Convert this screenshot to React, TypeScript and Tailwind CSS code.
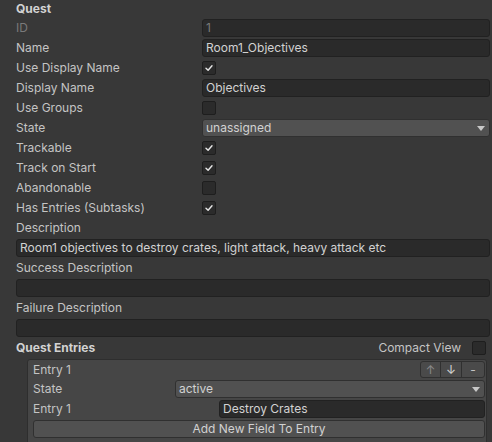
import React from 'react'

const font = { fontFamily: 'Inter, "Noto Sans", sans-serif' }

function Check({ on }: { on: boolean }) {
  return (
    <div className="w-[14px] h-[14px] rounded-[2px] bg-[#2b2b2b] border border-[#1e1e1e] flex items-center justify-center">
      {on && (
        <svg width="10" height="10" viewBox="0 0 10 10">
          <path d="M2 5.2 L4.1 7.2 L8 2.8" fill="none" stroke="#e6e6e6" strokeWidth="1.4" strokeLinecap="round" strokeLinejoin="round" />
        </svg>
      )}
    </div>
  )
}

function Arrow() {
  return (
    <svg width="8" height="5" viewBox="0 0 8 5" className="shrink-0">
      <path d="M0 0 H8 L4 5 Z" fill="#c8c8c8" />
    </svg>
  )
}

function TextField({ value, dim }: { value?: string; dim?: boolean }) {
  return (
    <div
      className={`flex-1 h-[18px] rounded-[3px] bg-[#2a2a2a] border border-[#212121] flex items-center px-[3px] ${
        dim ? 'text-[#7a7a7a]' : 'text-[#d2d2d2]'
      }`}
    >
      {value}
    </div>
  )
}

function Dropdown({ value }: { value: string }) {
  return (
    <div className="flex-1 h-[18px] rounded-[3px] bg-[#515151] border border-[#303030] flex items-center justify-between pl-[3px] pr-[4px] text-[#d2d2d2]">
      <span>{value}</span>
      <Arrow />
    </div>
  )
}

function Row({ label, children, dim }: { label: string; children?: React.ReactNode; dim?: boolean }) {
  return (
    <div className="flex items-center h-[20px] pl-[16px] pr-[2px]">
      <div className={`w-[186px] shrink-0 ${dim ? 'text-[#7a7a7a]' : ''}`}>{label}</div>
      <div className="flex-1 flex items-center">{children}</div>
    </div>
  )
}

export default function App() {
  return (
    <div className="w-[492px] h-[442px] overflow-hidden bg-[#383838] text-[#c4c4c4] text-[12px] leading-none" style={font}>
      <div className="flex items-center h-[18px] pl-[16px] font-bold text-[#d2d2d2]">Quest</div>
      <Row label="ID" dim>
        <TextField value="1" dim />
      </Row>
      <Row label="Name">
        <TextField value="Room1_Objectives" />
      </Row>
      <Row label="Use Display Name">
        <Check on />
      </Row>
      <Row label="Display Name">
        <TextField value="Objectives" />
      </Row>
      <Row label="Use Groups">
        <Check on={false} />
      </Row>
      <Row label="State">
        <Dropdown value="unassigned" />
      </Row>
      <Row label="Trackable">
        <Check on />
      </Row>
      <Row label="Track on Start">
        <Check on />
      </Row>
      <Row label="Abandonable">
        <Check on={false} />
      </Row>
      <Row label="Has Entries (Subtasks)">
        <Check on />
      </Row>

      {['Description', 'Success Description', 'Failure Description'].map((l, i) => (
        <div key={l}>
          <div className="flex items-center h-[20px] pl-[16px]">{l}</div>
          <div className="flex items-center h-[20px] pl-[16px] pr-[2px]">
            <TextField value={i === 0 ? 'Room1 objectives to destroy crates, light attack, heavy attack etc' : ''} />
          </div>
        </div>
      ))}

      <div className="flex items-center justify-between h-[20px] pl-[16px] pr-[6px]">
        <span className="font-bold text-[#d2d2d2]">Quest Entries</span>
        <div className="flex items-center gap-[11px]">
          <span>Compact View</span>
          <Check on={false} />
        </div>
      </div>

      <div className="ml-[27px] mr-[5px] mt-[1px] h-[100px] bg-[#464646] border border-[#2e2e2e] rounded-[3px] pl-[5px] pr-[1px]">
        <div className="flex items-center justify-between h-[19px]">
          <span>Entry 1</span>
          <div className="flex h-[17px] border border-[#303030] rounded-[3px] bg-[#4a4a4a] overflow-hidden">
            <div className="w-[20px] flex items-center justify-center text-[#8a8a8a] border-r border-[#303030]">↑</div>
            <div className="w-[21px] flex items-center justify-center text-[#d6d6d6] border-r border-[#303030]">↓</div>
            <div className="w-[22px] flex items-center justify-center text-[#c4c4c4]">-</div>
          </div>
        </div>
        <div className="flex items-center h-[20px]">
          <div className="w-[142px] shrink-0">State</div>
          <Dropdown value="active" />
        </div>
        <div className="flex items-center h-[20px]">
          <div className="w-[186px] shrink-0">Entry 1</div>
          <TextField value="Destroy Crates" />
        </div>
        <div className="flex items-center h-[20px]">
          <div className="flex-1 h-[18px] rounded-[3px] bg-[#515151] border border-[#303030] flex items-center justify-center text-[#d2d2d2]">
            Add New Field To Entry
          </div>
        </div>
      </div>
    </div>
  )
}
